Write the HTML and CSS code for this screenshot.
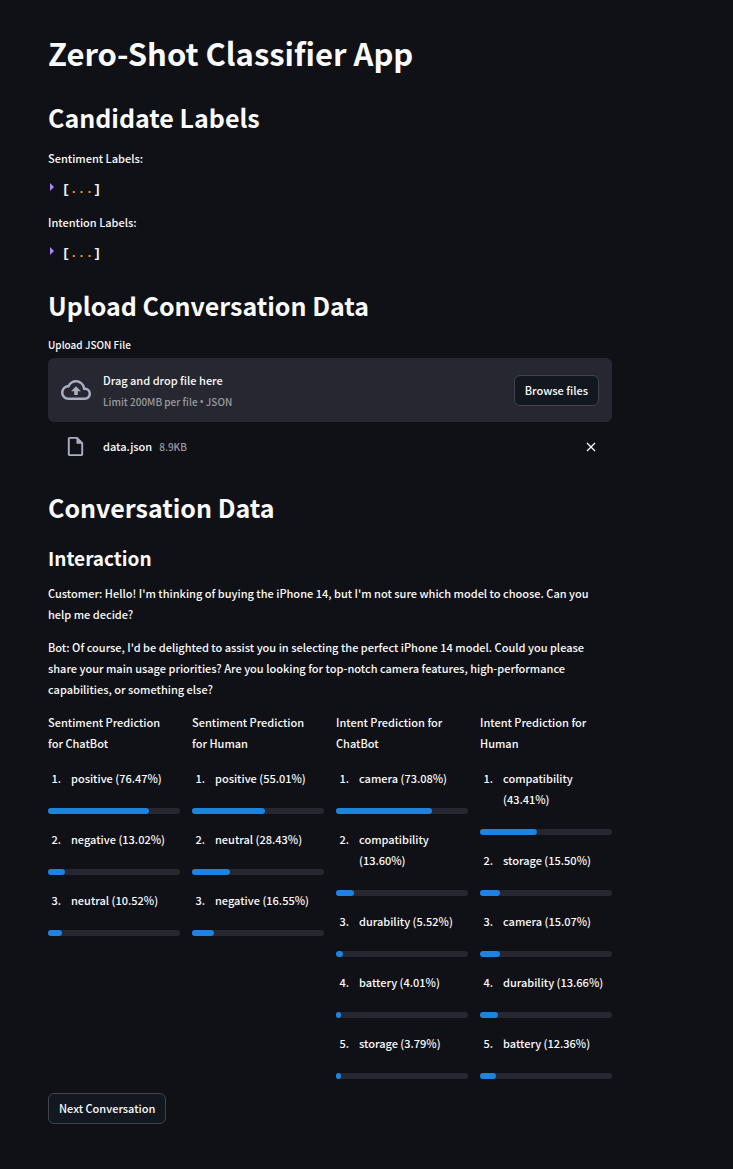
FILE: index.html
```html
<!DOCTYPE html>
<html lang="en">
<head>
<meta charset="utf-8">
<meta name="viewport" content="width=device-width, initial-scale=1">
<title>Zero-Shot Classifier App</title>
<link rel="stylesheet" href="styles.css">
</head>
<body>
<main class="page">
  <h1>Zero-Shot Classifier App</h1>

  <section class="section">
    <h2>Candidate Labels</h2>
    <p>Sentiment Labels:</p>
    <button class="json" type="button" aria-expanded="false"><span class="caret"></span><span>[<span class="dots">...</span>]</span></button>
    <p>Intention Labels:</p>
    <button class="json" type="button" aria-expanded="false"><span class="caret"></span><span>[<span class="dots">...</span>]</span></button>
  </section>

  <section class="section">
    <h2>Upload Conversation Data</h2>
    <div class="uploader">
      <span class="field-label" id="upload-label">Upload JSON File</span>
      <div class="dropzone">
        <svg class="cloud" viewBox="0 0 24 24" aria-hidden="true"><path d="M19.35 10.04A7.49 7.49 0 0 0 12 4C9.11 4 6.6 5.64 5.35 8.04A5.994 5.994 0 0 0 0 14c0 3.31 2.69 6 6 6h13c2.76 0 5-2.24 5-5 0-2.64-2.05-4.78-4.65-4.96zM19 18H6c-2.21 0-4-1.79-4-4 0-2.05 1.53-3.76 3.56-3.97l1.07-.11.5-.95A5.469 5.469 0 0 1 12 6c2.62 0 4.88 1.86 5.39 4.43l.3 1.5 1.53.11A2.98 2.98 0 0 1 22 15c0 1.65-1.35 3-3 3zM8 13h2.55v3h2.9v-3H16l-4-4z"/></svg>
        <div class="drop-text">
          <span>Drag and drop file here</span>
          <small>Limit 200MB per file <span class="dot">•</span> JSON</small>
        </div>
        <button class="button" type="button" aria-describedby="upload-label">Browse files</button>
      </div>
      <div class="file">
        <svg class="doc" viewBox="0 0 24 24" aria-hidden="true"><path d="M14 2H6c-1.100 0-1.990.9-1.990 2L4 20c0 1.100.89 2 1.990 2H18c1.100 0 2-.9 2-2V8l-6-6zM6 20V4h7v5h5v11H6z"/></svg>
        <div class="file-name"><span>data.json</span><small>8.9KB</small></div>
        <button class="remove" type="button" aria-label="Remove data.json"><svg viewBox="0 0 10 10" aria-hidden="true"><path d="M1 1l8 8M9 1L1 9"/></svg></button>
      </div>
    </div>
  </section>

  <section class="section">
    <h2>Conversation Data</h2>
    <h3>Interaction</h3>
    <p>Customer: Hello! I'm thinking of buying the iPhone 14, but I'm not sure which model to choose. Can you help me decide?</p>
    <p>Bot: Of course, I'd be delighted to assist you in selecting the perfect iPhone 14 model. Could you please share your main usage priorities? Are you looking for top-notch camera features, high-performance capabilities, or something else?</p>

    <div class="columns">
      <div class="column">
        <p>Sentiment Prediction for ChatBot</p>
        <ul class="scores">
          <li><span class="num">1.</span><span>positive (76.47%)</span><div class="bar"><div class="fill" style="width:76.47%"></div></div></li>
          <li><span class="num">2.</span><span>negative (13.02%)</span><div class="bar"><div class="fill" style="width:13.02%"></div></div></li>
          <li><span class="num">3.</span><span>neutral (10.52%)</span><div class="bar"><div class="fill" style="width:10.52%"></div></div></li>
        </ul>
      </div>
      <div class="column">
        <p>Sentiment Prediction for Human</p>
        <ul class="scores">
          <li><span class="num">1.</span><span>positive (55.01%)</span><div class="bar"><div class="fill" style="width:55.01%"></div></div></li>
          <li><span class="num">2.</span><span>neutral (28.43%)</span><div class="bar"><div class="fill" style="width:28.43%"></div></div></li>
          <li><span class="num">3.</span><span>negative (16.55%)</span><div class="bar"><div class="fill" style="width:16.55%"></div></div></li>
        </ul>
      </div>
      <div class="column">
        <p>Intent Prediction for ChatBot</p>
        <ul class="scores">
          <li><span class="num">1.</span><span>camera (73.08%)</span><div class="bar"><div class="fill" style="width:73.08%"></div></div></li>
          <li><span class="num">2.</span><span>compatibility (13.60%)</span><div class="bar"><div class="fill" style="width:13.6%"></div></div></li>
          <li><span class="num">3.</span><span>durability (5.52%)</span><div class="bar"><div class="fill" style="width:5.52%"></div></div></li>
          <li><span class="num">4.</span><span>battery (4.01%)</span><div class="bar"><div class="fill" style="width:4.01%"></div></div></li>
          <li><span class="num">5.</span><span>storage (3.79%)</span><div class="bar"><div class="fill" style="width:3.79%"></div></div></li>
        </ul>
      </div>
      <div class="column">
        <p>Intent Prediction for Human</p>
        <ul class="scores">
          <li><span class="num">1.</span><span>compatibility (43.41%)</span><div class="bar"><div class="fill" style="width:43.41%"></div></div></li>
          <li><span class="num">2.</span><span>storage (15.50%)</span><div class="bar"><div class="fill" style="width:15.5%"></div></div></li>
          <li><span class="num">3.</span><span>camera (15.07%)</span><div class="bar"><div class="fill" style="width:15.07%"></div></div></li>
          <li><span class="num">4.</span><span>durability (13.66%)</span><div class="bar"><div class="fill" style="width:13.66%"></div></div></li>
          <li><span class="num">5.</span><span>battery (12.36%)</span><div class="bar"><div class="fill" style="width:12.36%"></div></div></li>
        </ul>
      </div>
    </div>
    <button class="button" type="button">Next Conversation</button>
  </section>
</main>
</body>
</html>
```
FILE: styles.css
```css
* { box-sizing: border-box; }

body {
  margin: 0;
  background: #101116;
  color: #fafafa;
  font: 500 11px/21px "Noto Sans CJK SC", "Noto Sans", sans-serif;
}

h1, h2, h3, p, ul { margin: 0; padding: 0; }
h1 { font-size: 31px; line-height: 42px; font-weight: 700; margin-bottom: 2px; }
h2 { font-size: 25px; line-height: 34px; font-weight: 700; margin-bottom: 2px; }
h3 { font-size: 19px; line-height: 27px; font-weight: 700; margin-top: 6px; }
p { padding-right: 8px; }

button {
  font: inherit;
  color: inherit;
  cursor: pointer;
}

.page {
  max-width: 660px;
  padding: 32px 48px 44px;
  display: flex;
  flex-direction: column;
  gap: 24px;
}

.section {
  display: flex;
  flex-direction: column;
  align-items: flex-start;
  gap: 12px;
}

.json {
  display: flex;
  gap: 8px;
  align-items: center;
  padding: 0 2px 2px;
  border: 0;
  background: none;
  font: bold 13px/17px "Liberation Mono", monospace;
}
.caret {
  border: 4px solid transparent;
  border-left-color: #ae81ff;
  border-right: 0;
  margin-bottom: 6px;
}
.dots { color: #fd971f; }

.uploader { width: 100%; margin-bottom: 7px; }
.field-label {
  display: block;
  font-size: 10px;
  line-height: 18px;
  margin-bottom: 4px;
}
.dropzone {
  display: flex;
  align-items: center;
  gap: 12px;
  padding: 8px 13px;
  min-height: 64px;
  border-radius: 6px;
  background: #262730;
}
.cloud {
  width: 30px;
  height: 30px;
  fill: #a9aec4;
}
.drop-text {
  flex: 1;
  display: flex;
  flex-direction: column;
  padding-top: 2px;
}
small {
  font-size: 10px;
  color: #9a9b9f;
}
.dot { font-family: "Noto Sans", sans-serif; }

.button {
  padding: 4px 10px;
  border: 1px solid #41444c;
  border-radius: 6px;
  background: #131720;
}

.file {
  display: flex;
  align-items: center;
  gap: 16px;
  padding: 12px 12px 0 16px;
}
.doc {
  width: 23px;
  height: 25px;
  fill: #a9aec4;
}
.file-name {
  flex: 1;
  display: flex;
  gap: 7px;
}
.remove {
  display: flex;
  padding: 4px;
  border: 0;
  background: none;
}
.remove svg {
  width: 10px;
  height: 10px;
  fill: none;
  stroke: #fafafa;
  stroke-width: 1.3;
}

.columns {
  width: 100%;
  display: grid;
  grid-template-columns: repeat(4, 1fr);
  gap: 12px;
  margin-bottom: 2px;
}
.column {
  display: flex;
  flex-direction: column;
  gap: 14px;
}
.scores {
  list-style: none;
  display: flex;
  flex-direction: column;
  gap: 15px;
}
.scores li {
  display: grid;
  grid-template-columns: 13px 1fr;
  column-gap: 10px;
  row-gap: 19px;
}
.num { text-align: right; }
.bar {
  grid-column: 1 / -1;
  height: 6px;
  border-radius: 3px;
  background: #262730;
}
.fill {
  height: 100%;
  border-radius: 3px;
  background: #1c83e1;
}
```
